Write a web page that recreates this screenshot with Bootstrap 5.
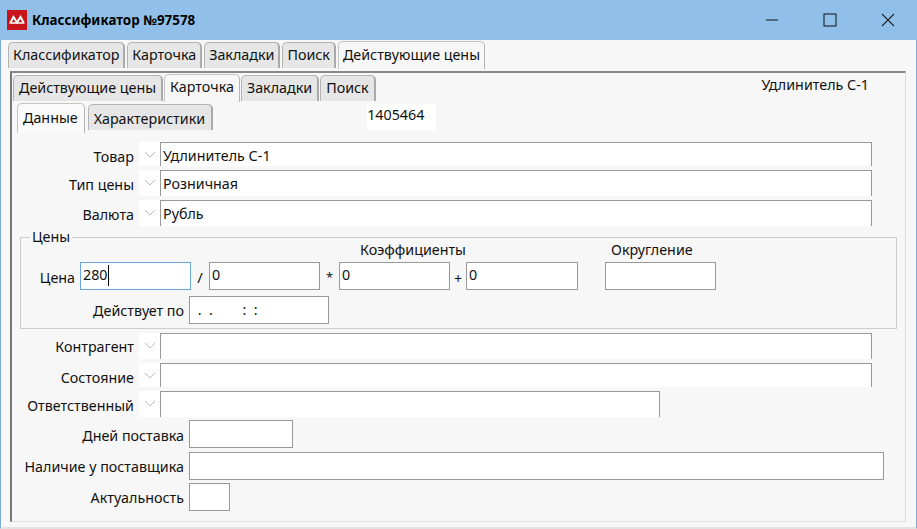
<!doctype html>
<html lang="ru">
<head>
<meta charset="UTF-8" />
<title>Классификатор №97578</title>
<link href="https://cdn.jsdelivr.net/npm/bootstrap@5.3.0/dist/css/bootstrap.min.css" rel="stylesheet" />
<style>
  html, body { height: 100%; }
  body { background: #f7f7f7; color: #111; font: 14.3px/18px "Noto Sans", "Open Sans", sans-serif; overflow: hidden; }
  .win { width: 917px; height: 529px; border-left: 1px solid #7ea9d9; border-right: 1px solid #7ea9d9; border-bottom: 2px solid #e2e2e2; }
  .titlebar { height: 40px; margin: 0 -1px; background: #90c0e9; }
  .win-logo { margin-left: 7px; }
  .win-title { margin-left: 5px; font-weight: 700; font-size: 13.4px; color: #000; }
  .win-ctrl { width: 58px; height: 40px; }
  .tabs-x { border: 0; gap: 2px; flex-wrap: nowrap; }
  .tabs-x .nav-link { height: 26px; padding: 2px 4px 0 4px; margin: 0; color: #111; background: #e6e6e6; line-height: 20px;
    border: 1px solid #b4b4b4; border-right: 2px solid #aaa; border-bottom: 0; border-radius: 5px 5px 0 0; white-space: nowrap; }
  .tabs-x .nav-link.active { height: 28px; margin-top: -1px; color: #111; background: #f7f7f7; border-color: #c4c4c4; border-right: 1px solid #b4b4b4; padding-top: 3px; }
  .tabs-outer { padding: 2px 0 0 7px; height: 31px; }
  .panel-x { margin-left: 9px; width: 896px; height: 451px; border-top: 2px solid #888; border-left: 2px solid #777; border-right: 1px solid #ddd; border-bottom: 1px solid #ddd; }
  .tabs-inner { padding: 2px 0 0 1px; height: 31px; gap: 1px; }
  .tabs-x.tabs-inner .nav-link { padding-left: 5px; padding-right: 5px; }
  .tabs-x.tabs-inner .nav-link.active { padding-top: 2px; }
  .prod-name { margin: 2px 36px 0 auto; line-height: 20px; }
  .tabs-third { padding-left: 5px; height: 28px; gap: 3px; }
  .tabs-x.tabs-third .nav-link { line-height: 23px; padding-left: 5px; padding-right: 6px; }
  .tabs-x.tabs-third .nav-link.active { height: 30px; background: #fafafa; padding-top: 2px; }
  .code-box { width: 69px; height: 26px; margin-left: 154px; background: #fff; line-height: 22px; }
  .row-x { display: flex; align-items: stretch; }
  .lbl { text-align: right; padding-right: 5px; white-space: nowrap; line-height: 29px; }
  .lbl-a { width: 127px; }
  .lbl-b { width: 177px; }
  .lbl-low { line-height: 31px; }
  .lbl-up { line-height: 27px; }
  .chev { width: 21px; background: #fff; display: flex; justify-content: center; padding-top: 9px; }
  .fld { background: #fff; border: 1px solid #999; border-radius: 0; padding: 0 2px; font: inherit; color: #111; box-shadow: none; min-height: 0; line-height: 20px; }
  .fld.form-control { color: #111; font-size: 14.3px; }
  .fld-open { border-bottom: 0; width: 712px; }
  .fld-short { width: 500px; }
  .fld-top { padding-top: 2px; }
  .fld-num { padding-bottom: 2px; }
  .h24 { height: 24px; }
  .h26 { height: 26px; }
  .h28 { height: 28px; }
  .m-t4 { margin-top: 4px; }
  .m-t3 { margin-top: 3px; }
  .m-t6 { margin-top: 6px; }
  .m-t10 { margin-top: 10px; }
  .w-104 { width: 104px; }
  .w-695 { width: 695px; }
  .w-41 { width: 41px; }
  .w-140 { width: 140px; }
  .w-111 { width: 111px; }
  .w-112 { width: 112px; }
  .fs-x { margin: 4px 0 0 8px; width: 877px; height: 99px; border: 1px solid #ccc; padding: 0; min-width: 0; }
  .fs-x legend { float: none; width: auto; margin: 0 0 0 9px; padding: 0 2px; font-size: 14.3px; line-height: 14px; height: 14px; }
  .hdr-row { height: 18px; line-height: 12px; }
  .hdr-coef { margin-left: 339px; width: 251px; }
  .lbl-price { width: 59px; }
  .lbl-valid { width: 168px; }
  .op { text-align: center; line-height: 30px; }
  .op-1 { width: 18px; font-size: 15px; } .op-2 { width: 19px; line-height: 32px; font-size: 12px; } .op-3 { width: 16px; line-height: 34px; } .op-4 { width: 27px; }
  .fld-focus { border-color: #6aa6e0; display: flex; align-items: flex-start; padding-top: 2px; }
  .caret-x { width: 1px; height: 21px; background: #000; }
  .mask { padding: 3px 0 0 4px; white-space: pre; }
</style>
</head>
<body>
<div class="win">
  <div class="titlebar d-flex align-items-center">
    <svg class="win-logo" width="20" height="20" viewBox="0 0 20 20">
      <rect width="20" height="20" fill="#c8151b"/>
      <path d="M3.500 12.500 6.500 7 10 12.500 13.500 7 16.500 12.500" fill="none" stroke="#fff" stroke-width="2"/>
      <path d="M2.500 13H17.500" stroke="#fff" stroke-width="1.500"/>
    </svg>
    <span class="win-title">Классификатор №97578</span>
    <div class="ms-auto d-flex">
      <div class="win-ctrl d-flex align-items-center justify-content-center"><svg width="14" height="14" viewBox="0 0 14 14"><path d="M1 7H13" stroke="#111" stroke-width="1"/></svg></div>
      <div class="win-ctrl d-flex align-items-center justify-content-center"><svg width="14" height="14" viewBox="0 0 14 14"><rect x="1" y="1" width="12" height="12" fill="none" stroke="#111" stroke-width="1"/></svg></div>
      <div class="win-ctrl d-flex align-items-center justify-content-center"><svg width="14" height="14" viewBox="0 0 14 14"><path d="M1 1 13 13M13 1 1 13" stroke="#222" stroke-width="1.100"/></svg></div>
    </div>
  </div>

  <div class="tabs-outer">
    <ul class="nav nav-tabs tabs-x">
      <li class="nav-item"><a class="nav-link" href="#">Классификатор</a></li>
      <li class="nav-item"><a class="nav-link" href="#">Карточка</a></li>
      <li class="nav-item"><a class="nav-link" href="#">Закладки</a></li>
      <li class="nav-item"><a class="nav-link" href="#">Поиск</a></li>
      <li class="nav-item"><a class="nav-link active" href="#">Действующие цены</a></li>
    </ul>
  </div>

  <div class="panel-x">
    <div class="d-flex">
      <ul class="nav nav-tabs tabs-x tabs-inner">
        <li class="nav-item"><a class="nav-link" href="#">Действующие цены</a></li>
        <li class="nav-item"><a class="nav-link active" href="#">Карточка</a></li>
        <li class="nav-item"><a class="nav-link" href="#">Закладки</a></li>
        <li class="nav-item"><a class="nav-link" href="#">Поиск</a></li>
      </ul>
      <span class="prod-name">Удлинитель С-1</span>
    </div>
    <div class="d-flex">
      <ul class="nav nav-tabs tabs-x tabs-third">
        <li class="nav-item"><a class="nav-link active" href="#">Данные</a></li>
        <li class="nav-item"><a class="nav-link" href="#">Характеристики</a></li>
      </ul>
      <div class="code-box">1405464</div>
    </div>

    <div class="row-x h24 m-t10">
      <div class="lbl lbl-a">Товар</div>
      <div class="chev"><svg width="12" height="7" viewBox="0 0 12 7"><path d="M1 1 6 6 11 1" fill="none" stroke="#bbb"/></svg></div>
      <input class="form-control fld fld-open fld-top" value="Удлинитель С-1">
    </div>
    <div class="row-x h26 m-t4">
      <div class="lbl lbl-a">Тип цены</div>
      <div class="chev"><svg width="12" height="7" viewBox="0 0 12 7"><path d="M1 1 6 6 11 1" fill="none" stroke="#bbb"/></svg></div>
      <input class="form-control fld fld-open" value="Розничная">
    </div>
    <div class="row-x h26 m-t4">
      <div class="lbl lbl-a">Валюта</div>
      <div class="chev"><svg width="12" height="7" viewBox="0 0 12 7"><path d="M1 1 6 6 11 1" fill="none" stroke="#bbb"/></svg></div>
      <input class="form-control fld fld-open" value="Рубль">
    </div>

    <fieldset class="fs-x">
      <legend>Цены</legend>
      <div class="d-flex hdr-row">
        <span class="hdr-coef">Коэффициенты</span>
        <span>Округление</span>
      </div>
      <div class="row-x h28">
        <div class="lbl lbl-low lbl-price">Цена</div>
        <div class="fld fld-focus w-111"><span>280</span><span class="caret-x"></span></div>
        <div class="op op-1">/</div>
        <input class="form-control fld fld-num w-111" value="0">
        <div class="op op-2">*</div>
        <input class="form-control fld fld-num w-111" value="0">
        <div class="op op-3">+</div>
        <input class="form-control fld fld-num w-112" value="0">
        <div class="op op-4"></div>
        <input class="form-control fld w-111">
      </div>
      <div class="row-x h28 m-t6">
        <div class="lbl lbl-valid">Действует по</div>
        <div class="fld w-140 mask"> .  .        :  :</div>
      </div>
    </fieldset>

    <div class="row-x h26 m-t4">
      <div class="lbl lbl-up lbl-a">Контрагент</div>
      <div class="chev"><svg width="12" height="7" viewBox="0 0 12 7"><path d="M1 1 6 6 11 1" fill="none" stroke="#bbb"/></svg></div>
      <input class="form-control fld fld-open">
    </div>
    <div class="row-x h24 m-t4">
      <div class="lbl lbl-a">Состояние</div>
      <div class="chev"><svg width="12" height="7" viewBox="0 0 12 7"><path d="M1 1 6 6 11 1" fill="none" stroke="#bbb"/></svg></div>
      <input class="form-control fld fld-open">
    </div>
    <div class="row-x h26 m-t4">
      <div class="lbl lbl-a">Ответственный</div>
      <div class="chev"><svg width="12" height="7" viewBox="0 0 12 7"><path d="M1 1 6 6 11 1" fill="none" stroke="#bbb"/></svg></div>
      <input class="form-control fld fld-open fld-short">
    </div>
    <div class="row-x h28 m-t3">
      <div class="lbl lbl-low lbl-b">Дней поставка</div>
      <input class="form-control fld w-104">
    </div>
    <div class="row-x h28 m-t4">
      <div class="lbl lbl-b">Наличие у поставщика</div>
      <input class="form-control fld w-695">
    </div>
    <div class="row-x h28 m-t3">
      <div class="lbl lbl-b">Актуальность</div>
      <input class="form-control fld w-41">
    </div>
  </div>
</div>
<script src="https://cdn.jsdelivr.net/npm/bootstrap@5.3.0/dist/js/bootstrap.bundle.min.js"></script>
</body>
</html>
